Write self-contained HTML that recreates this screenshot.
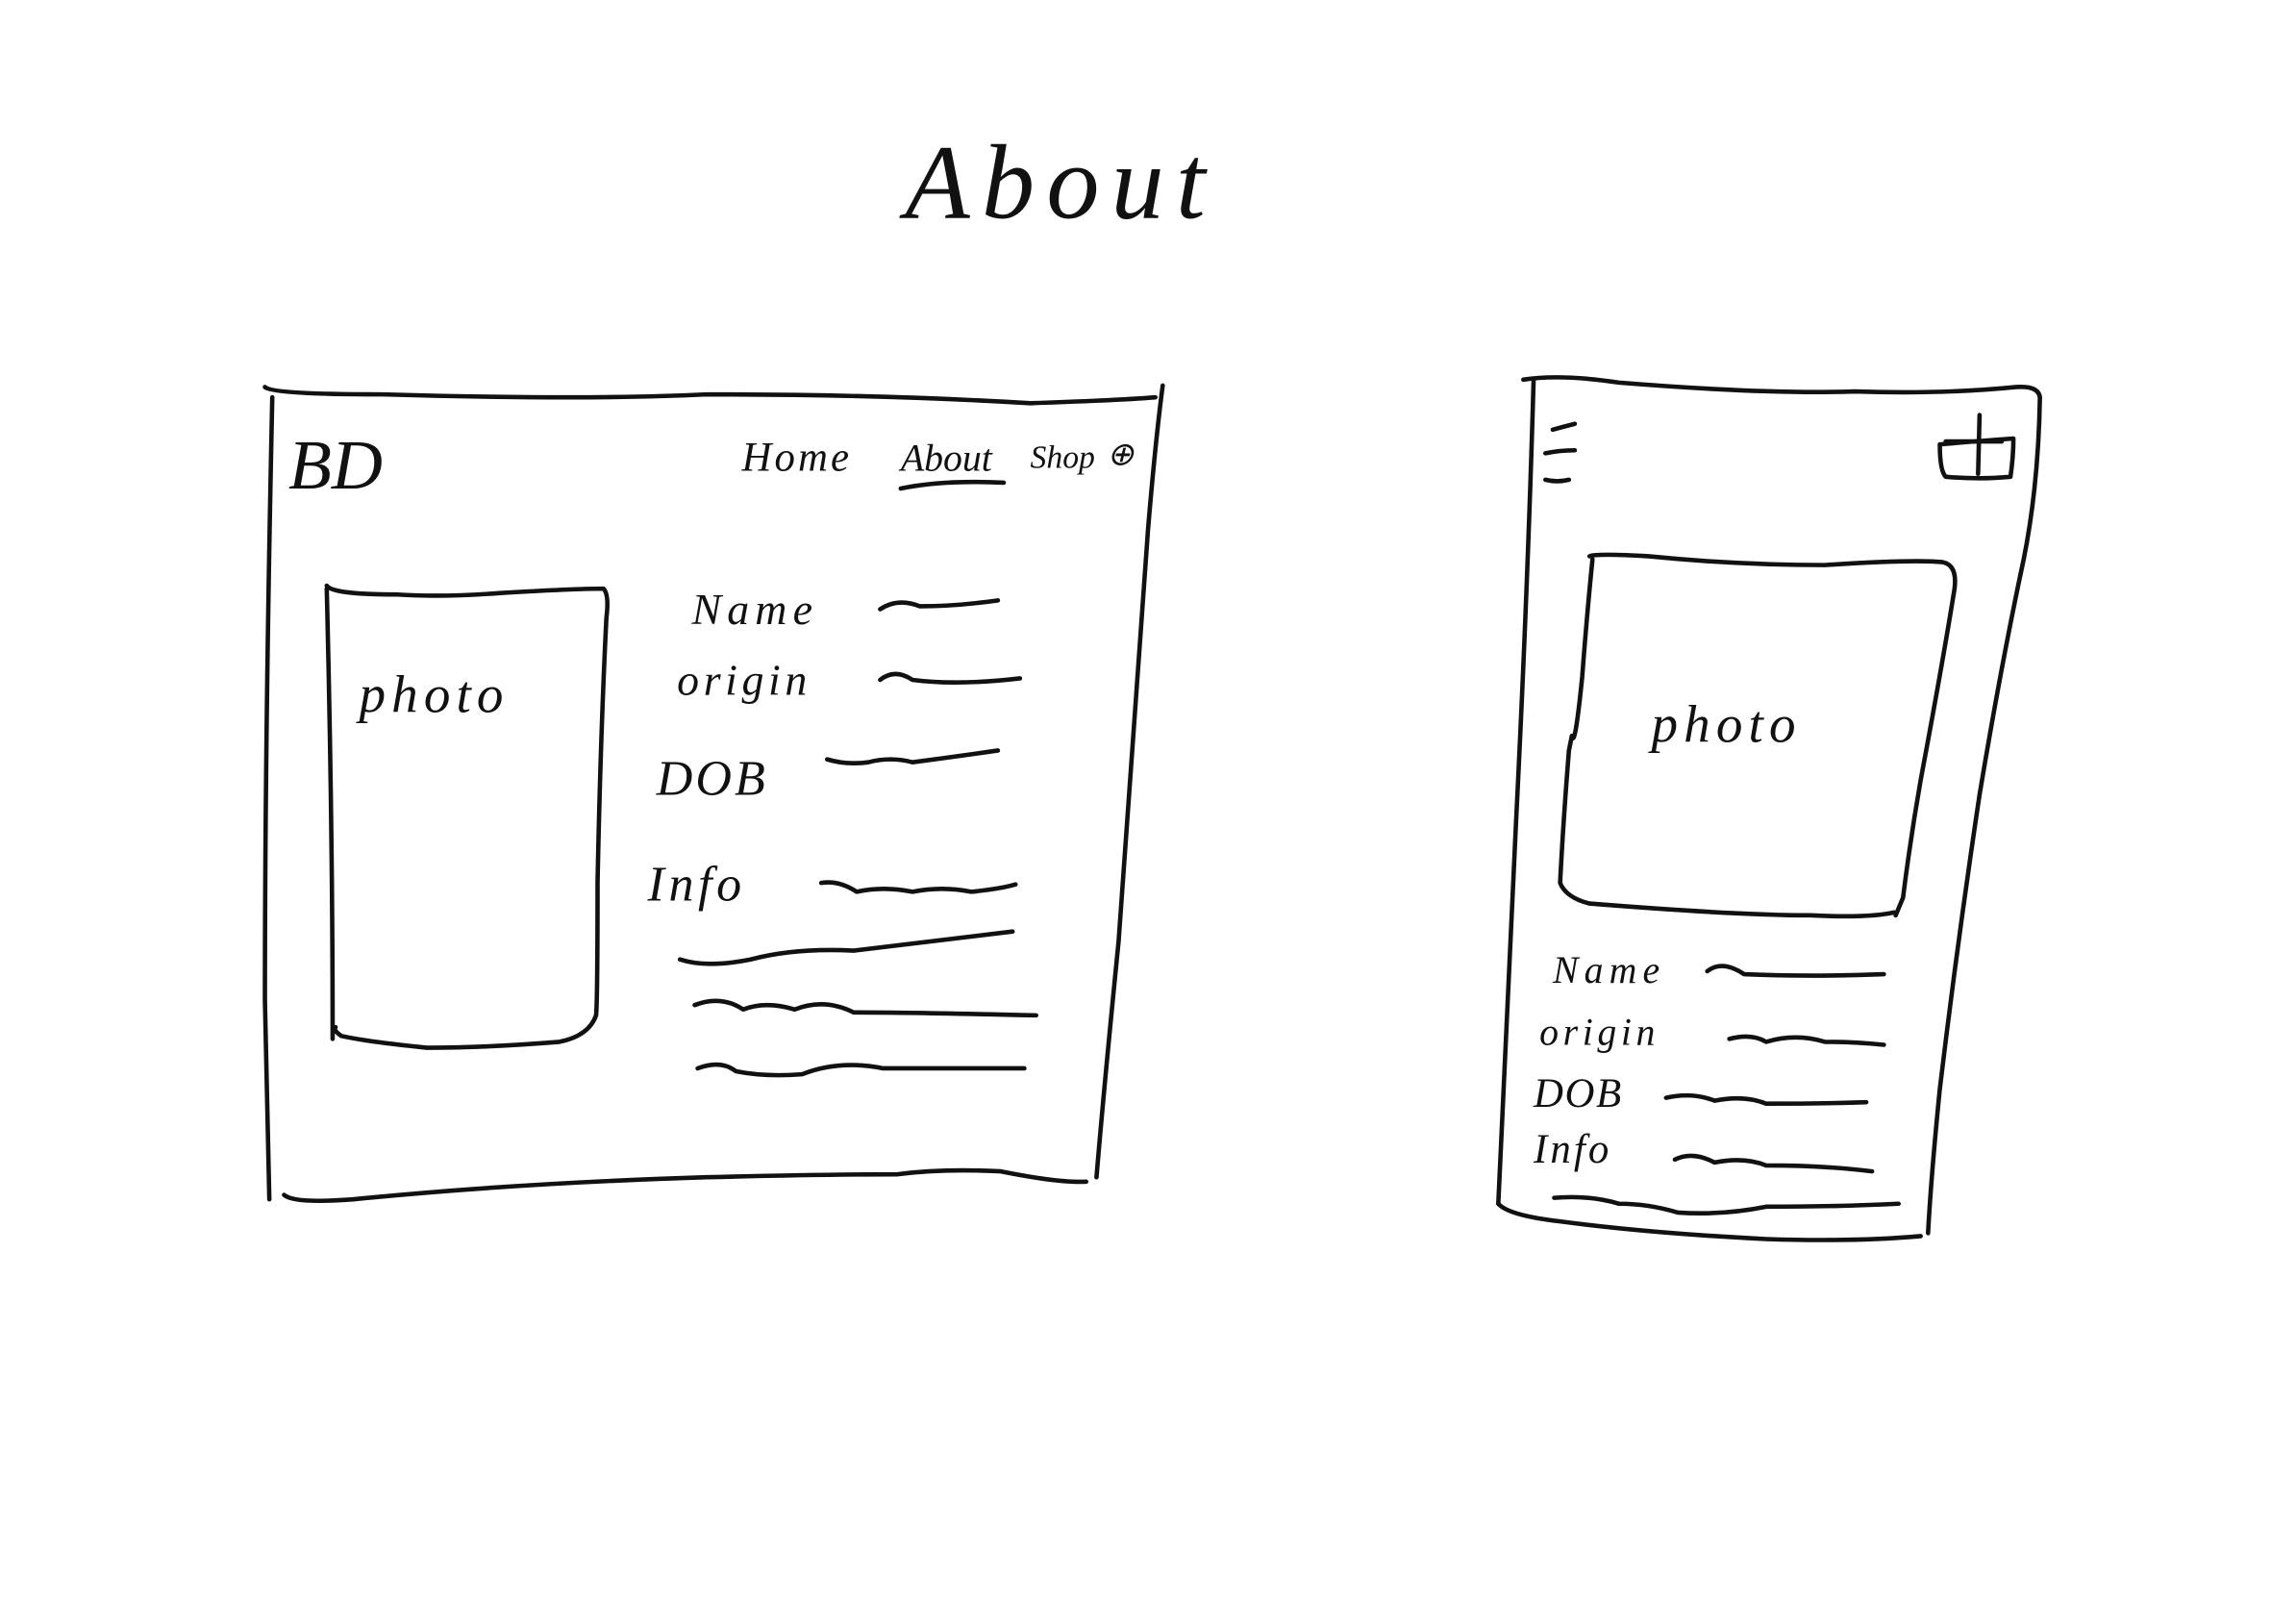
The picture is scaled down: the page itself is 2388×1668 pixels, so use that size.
<!DOCTYPE html>
<html><head><meta charset="utf-8"><style>
html,body{margin:0;padding:0;background:#fff;}
svg{display:block}
text{font-family:"Liberation Serif",serif;font-style:italic;fill:#111;}
</style></head><body>
<svg width="2388" height="1668" viewBox="0 0 1560 1090" preserveAspectRatio="none" xmlns="http://www.w3.org/2000/svg">
<g fill="none" stroke="#111" stroke-width="3" stroke-linecap="round" stroke-linejoin="round">
<!-- left frame -->
<path d="M180 263 Q185 268 260 268 Q400 272 480 268 Q600 268 700 274 Q760 272 785 270"/>
<path d="M185 270 Q180 500 180 680 Q182 780 183 815"/>
<path d="M790 262 Q785 300 780 360 Q770 500 760 640 Q750 740 745 800"/>
<path d="M193 812 Q200 818 240 815 Q350 804 480 800 Q560 798 610 798 Q640 794 680 796 Q720 804 738 803"/>
<!-- photo box -->
<path d="M222 398 Q226 404 270 404 Q300 406 340 403 Q390 400 410 400 Q414 404 412 420 Q408 500 406 600 Q406 680 405 690 Q400 704 380 708 Q330 712 290 712 Q250 708 232 704 Q226 700 228 698"/>
<path d="M222 400 Q226 560 226 706"/>
<!-- underline about -->
<path d="M612 332 Q640 326 682 328"/>
<!-- squiggles -->
<path d="M598 414 Q610 406 625 412 Q650 412 678 408"/>
<path d="M598 462 Q608 454 620 462 Q650 466 693 461"/>
<path d="M562 516 Q575 520 590 518 Q605 514 620 518 Q650 514 678 510"/>
<path d="M558 600 Q570 598 582 606 Q600 602 620 606 Q640 602 660 606 Q680 604 690 601"/>
<path d="M462 652 Q480 658 510 652 Q540 644 580 646 Q630 640 688 633"/>
<path d="M472 683 Q490 676 505 686 Q520 680 540 686 Q560 678 580 688 Q620 688 704 690"/>
<path d="M474 726 Q490 720 500 728 Q520 732 545 730 Q570 720 600 726 Q650 726 696 726"/>
<!-- right frame -->
<path d="M1035 258 Q1060 254 1100 260 Q1200 268 1260 266 Q1320 268 1370 263 Q1385 262 1386 270"/>
<path d="M1042 258 Q1038 400 1030 560 Q1022 720 1018 818"/>
<path d="M1386 270 Q1385 330 1375 380 Q1360 450 1345 540 Q1330 640 1318 740 Q1312 800 1310 838"/>
<path d="M1018 818 Q1025 826 1060 830 Q1120 838 1200 842 Q1260 844 1305 840"/>
<!-- hamburger -->
<path d="M1055 292 Q1062 290 1070 288"/>
<path d="M1050 308 Q1060 306 1070 306"/>
<path d="M1050 326 Q1058 328 1066 326"/>
<!-- basket -->
<path d="M1318 302 Q1318 320 1322 324 Q1345 326 1366 324 Q1368 310 1368 298 Q1340 300 1318 302 Z"/>
<path d="M1345 282 L1344 322"/>
<path d="M1322 300 L1360 300"/>
<!-- mobile photo -->
<path d="M1080 378 Q1085 376 1120 378 Q1180 384 1240 384 Q1300 380 1320 382 Q1330 384 1328 400 Q1320 450 1305 530 Q1298 570 1293 610 L1288 622"/>
<path d="M1082 380 Q1078 420 1075 460 Q1070 510 1068 500 L1066 510 Q1062 560 1060 600 Q1064 610 1080 614 Q1180 622 1230 622 Q1270 624 1287 620"/>
<!-- mobile squiggles -->
<path d="M1160 660 Q1170 652 1185 662 Q1230 664 1280 662"/>
<path d="M1175 706 Q1190 702 1200 708 Q1220 702 1240 708 Q1260 708 1280 710"/>
<path d="M1132 746 Q1150 742 1165 748 Q1185 744 1200 750 Q1240 750 1268 749"/>
<path d="M1138 788 Q1150 782 1165 790 Q1185 786 1200 792 Q1240 792 1272 796"/>
<path d="M1056 814 Q1080 812 1100 818 Q1120 818 1140 824 Q1170 826 1200 820 Q1250 820 1290 818"/>
</g>
<text x="615" y="148" font-size="72" letter-spacing="8">About</text>
<text x="196" y="332" font-size="48">BD</text>
<text x="504" y="320" font-size="28" letter-spacing="2">Home</text>
<text x="612" y="320" font-size="26">About</text>
<text x="700" y="318" font-size="22">Shop</text>
<text x="752" y="316" font-size="22">⊕</text>
<text x="244" y="484" font-size="36" letter-spacing="4">photo</text>
<text x="470" y="424" font-size="30" letter-spacing="4">Name</text>
<text x="460" y="472" font-size="30" letter-spacing="3">origin</text>
<text x="446" y="540" font-size="34" letter-spacing="2">DOB</text>
<text x="440" y="612" font-size="34" letter-spacing="3">Info</text>
<text x="1122" y="504" font-size="36" letter-spacing="4">photo</text>
<text x="1055" y="668" font-size="26" letter-spacing="4">Name</text>
<text x="1046" y="710" font-size="26" letter-spacing="3">origin</text>
<text x="1042" y="752" font-size="28" letter-spacing="1">DOB</text>
<text x="1042" y="790" font-size="28" letter-spacing="2">Info</text>
</svg>
</body></html>
